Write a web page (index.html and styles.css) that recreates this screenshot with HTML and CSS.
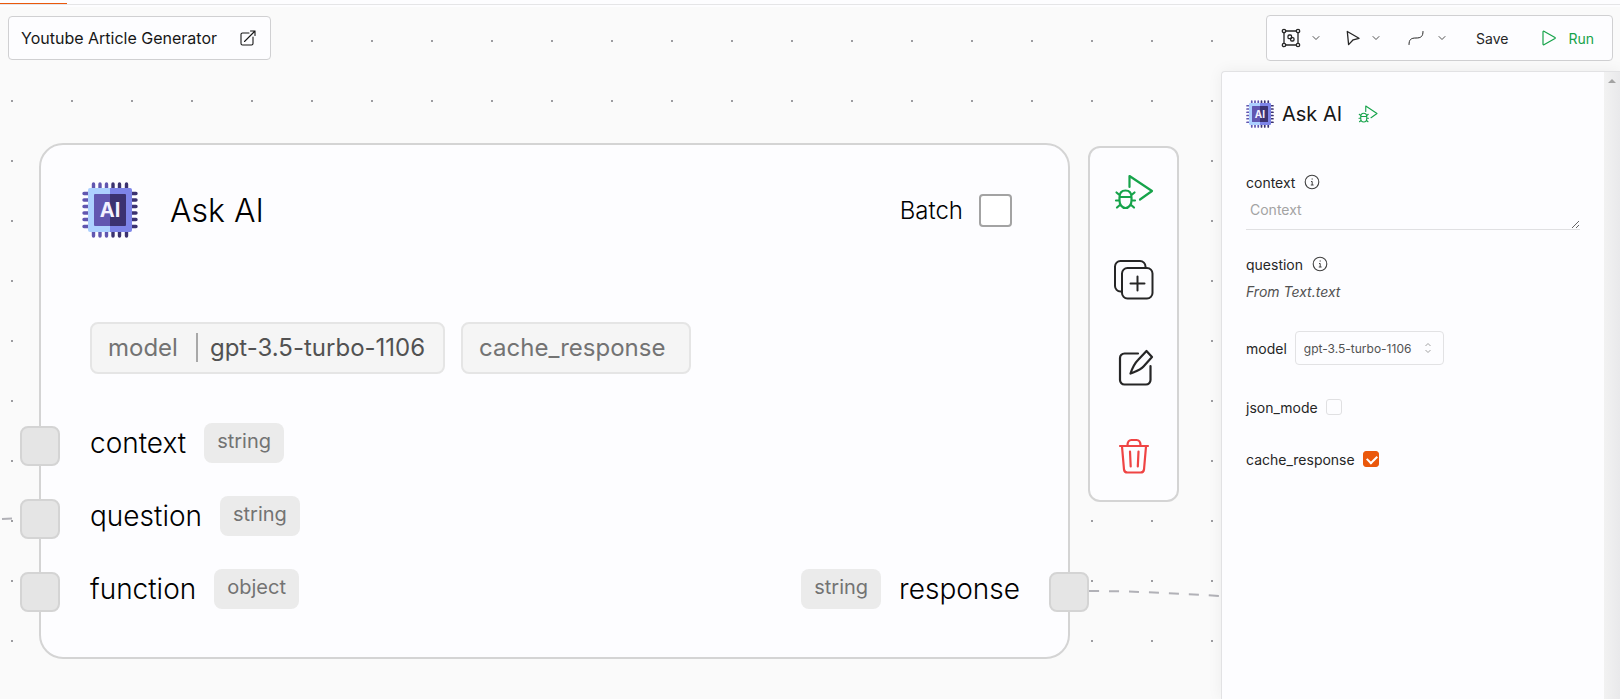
FILE: index.html
```html
<!DOCTYPE html>
<html lang="en">
<head>
  <meta charset="UTF-8">
  <title>Youtube Article Generator</title>
  <meta name="viewport" content="width=device-width, initial-scale=1.0">
  <link rel="stylesheet" href="styles.css">
</head>
<body>
  <svg class="sprite" aria-hidden="true">
    <symbol id="chip" viewBox="0 0 56 56">
      <g stroke-width="3.4" stroke-linecap="round">
        <path stroke="#6156b0" d="M11.5 2v52M18 2v52M24.5 2v52M2 11.5h26M2 18h26M2 24.5h26M2 31h26M2 37.5h26M2 44.5h26"/>
        <path stroke="#3b3270" d="M31 2v52M37.5 2v52M44.5 2v52M28 11.5h26M28 18h26M28 24.5h26M28 31h26M28 37.5h26M28 44.5h26"/>
      </g>
      <path fill="#acd0ff" d="M28 6H8a2 2 0 0 0-2 2v40a2 2 0 0 0 2 2h20z"/>
      <path fill="#7d84e8" d="M28 6h20a2 2 0 0 1 2 2v40a2 2 0 0 1-2 2H28z"/>
      <path fill="#6156b0" d="M28 12H13a1 1 0 0 0-1 1v30a1 1 0 0 0 1 1h15z"/>
      <path fill="#3b3270" d="M28 12h15a1 1 0 0 1 1 1v30a1 1 0 0 1-1 1H28z"/>
    </symbol>
    <symbol id="bug-play" viewBox="0 0 40 40">
      <g fill="none" stroke="currentColor" stroke-width="2.2" stroke-linecap="round" stroke-linejoin="round">
        <path d="M15.500 15V4L38 19 26 27.500"/>
        <path d="M5.500 25.500c0-4.500 2.500-7 6-7s6 2.500 6 7v3c0 4-2.500 7.500-6 7.500s-6-3.500-6-7.500zM5.500 25h12M5.500 23l-3-2.500M17.500 23l3-2.500M5.500 28.500H2M17.500 28.500H21M6.500 32.500l-3.500 3M16.500 32.500l3.500 3"/>
      </g>
    </symbol>
    <symbol id="chevron" viewBox="0 0 8 8">
      <path fill="none" stroke="currentColor" stroke-linecap="round" stroke-linejoin="round" d="M1 2.500l3 3 3-3"/>
    </symbol>
    <symbol id="info" viewBox="0 0 16 16">
      <circle cx="8" cy="8" r="6.800" fill="none" stroke="currentColor" stroke-width="1.100"/>
      <path fill="none" stroke="currentColor" stroke-width="1" d="M7 7.500h1.200V11M6.800 11h2.800M7.600 5h1.200"/>
    </symbol>
  </svg>

  <div class="tabs"><span class="tab-active"></span></div>

  <main class="canvas">
    <svg class="edges" aria-hidden="true">
      <path d="M2 512L40 510"/>
      <path d="M1089 584C1140 584 1180 587 1240 590"/>
    </svg>

    <header class="topbar">
      <div class="title-box">
        <span>Youtube Article Generator</span>
        <button class="icon-btn" aria-label="Open">
          <svg width="16" height="16" viewBox="0 0 16 16" fill="none" stroke="currentColor" stroke-width="1.100" stroke-linecap="round" stroke-linejoin="round"><path d="M9 3H2.500A1.500 1.500 0 0 0 1 4.500v9A1.500 1.500 0 0 0 2.500 15h9a1.500 1.500 0 0 0 1.500-1.500V7M4.500 11.500L15 1M10.500 1H15v4.500"/></svg>
        </button>
      </div>

      <div class="toolbar">
        <button class="tool" aria-label="Group">
          <svg width="20" height="20" viewBox="0 0 20 20" fill="none" stroke="currentColor" stroke-width="1.300"><path d="M5 3h10M5 17h10M3 5v10M17 5v10"/><circle cx="3" cy="3" r="1.700"/><circle cx="17" cy="3" r="1.700"/><circle cx="3" cy="17" r="1.700"/><circle cx="17" cy="17" r="1.700"/><rect x="7" y="7" width="3.600" height="3.600" rx="1.200"/><rect x="9.600" y="9.600" width="3.400" height="3.400" rx="1.200"/></svg>
          <svg class="chevron" width="8" height="8"><use href="#chevron"/></svg>
        </button>
        <button class="tool" aria-label="Pointer">
          <svg width="16" height="16" viewBox="0 0 16 16" fill="none" stroke="currentColor" stroke-width="1.300" stroke-linejoin="round"><path d="M2.300 1.500L14 8.300 8.200 9.800 3.600 14.600z"/></svg>
          <svg class="chevron" width="8" height="8"><use href="#chevron"/></svg>
        </button>
        <button class="tool curve" aria-label="Edge style">
          <svg width="16" height="16" viewBox="0 0 16 16" fill="none" stroke="currentColor" stroke-width="1" stroke-linecap="round"><path d="M1 14.500C1 9.500 3 8 8 8s7-1.500 7-6.500"/></svg>
          <svg class="chevron" width="8" height="8"><use href="#chevron"/></svg>
        </button>
        <button class="tool save">Save</button>
        <button class="tool run">
          <svg width="16" height="16" viewBox="0 0 16 16" fill="none" stroke="currentColor" stroke-width="1.200" stroke-linejoin="round"><path d="M2 1.800v12.400a.6.6 0 0 0 .9.5L14 8.500a.6.6 0 0 0 0-1L2.900 1.300a.6.6 0 0 0-.9.500z"/></svg>
          <span>Run</span>
        </button>
      </div>
    </header>

    <section class="node">
      <div class="node-head">
        <svg width="56" height="56" viewBox="0 0 56 56"><use href="#chip"/><text class="chip-text" x="28" y="35" text-anchor="middle">AI</text></svg>
        <h2>Ask AI</h2>
        <label class="batch">Batch <input type="checkbox"></label>
      </div>

      <div class="chips">
        <div class="chip"><span>model</span><span class="chip-value">gpt-3.5-turbo-1106</span></div>
        <div class="chip flag"><span>cache_response</span></div>
      </div>

      <div class="ports">
        <div class="port">
          <i class="handle in"></i>
          <span>context</span><span class="type">string</span>
        </div>
        <div class="port">
          <i class="handle in"></i>
          <span>question</span><span class="type">string</span>
        </div>
        <div class="port">
          <i class="handle in"></i>
          <span>function</span><span class="type">object</span>
          <span class="type output">string</span><span>response</span>
          <i class="handle out"></i>
        </div>
      </div>
    </section>

    <div class="node-menu">
      <button class="green" aria-label="Run node"><svg width="40" height="40"><use href="#bug-play"/></svg></button>
      <button aria-label="Duplicate">
        <svg width="40" height="40" viewBox="0 0 40 40" fill="none" stroke="currentColor" stroke-width="2" stroke-linecap="round" stroke-linejoin="round"><rect x="8" y="8" width="30.500" height="30.500" rx="5.500"/><path d="M8 31.500H6.500A5.500 5.500 0 0 1 1 26V6.500A5.500 5.500 0 0 1 6.500 1H26a5.500 5.500 0 0 1 5.500 5.500V8M23.500 16.500v14M16.500 23.500h14"/></svg>
      </button>
      <button aria-label="Edit">
        <svg width="40" height="40" viewBox="0 0 40 40" fill="none" stroke="currentColor" stroke-width="2.200" stroke-linecap="round" stroke-linejoin="round"><path d="M24 5.500H10.500A4.500 4.500 0 0 0 6 10v22a4.500 4.500 0 0 0 4.500 4.500h21.500a4.500 4.500 0 0 0 4.500-4.500V18"/><path d="M32.500 3l5.500 6-8.500 9.500c-3 3.500-7 4.500-13 7 2-6 4.500-10.500 7.500-13.500z"/></svg>
      </button>
      <button class="red" aria-label="Delete">
        <svg width="40" height="40" viewBox="0 0 40 40" fill="none" stroke="currentColor" stroke-width="2.200" stroke-linecap="round" stroke-linejoin="round"><path d="M6 10h28M13.500 9.500C13.500 6 15 4 17.500 4h5c2.500 0 4 2 4 5.500M8 10.500l2 23a3.500 3.500 0 0 0 3.500 3h13a3.500 3.500 0 0 0 3.500-3l2-23M16 15.500l.7 15M24.500 15.500l-.7 15"/></svg>
      </button>
    </div>

    <aside class="panel">
      <form class="panel-body">
        <div class="panel-head">
          <svg width="28" height="28" viewBox="0 0 56 56"><use href="#chip"/><text class="chip-text" x="28" y="35" text-anchor="middle">AI</text></svg>
          <h3>Ask AI</h3>
          <button type="button" class="icon-btn green" aria-label="Run node"><svg width="20" height="20"><use href="#bug-play"/></svg></button>
        </div>

        <div class="field">
          <div class="field-label"><label for="context">context</label><svg width="16" height="16"><use href="#info"/></svg></div>
          <textarea id="context" placeholder="Context"></textarea>
        </div>
        <div class="field">
          <div class="field-label"><span>question</span><svg width="16" height="16"><use href="#info"/></svg></div>
          <em>From Text.text</em>
        </div>
        <div class="field row model-row">
          <label for="model">model</label>
          <div class="select">
            <select id="model"><option>gpt-3.5-turbo-1106</option></select>
            <svg width="8" height="12" viewBox="0 0 8 12" fill="none" stroke="currentColor"><path d="M1.500 4L4 1.500 6.500 4M1.500 8L4 10.500 6.500 8"/></svg>
          </div>
        </div>
        <div class="field row">
          <label for="json">json_mode</label>
          <input type="checkbox" id="json">
        </div>
        <div class="field row">
          <label for="cache">cache_response</label>
          <input type="checkbox" id="cache" checked>
        </div>
      </form>
      <div class="scrollbar"></div>
    </aside>
  </main>
</body>
</html>
```
FILE: styles.css
```css
* {
  box-sizing: border-box;
}
body {
  margin: 0;
  height: 100vh;
  display: flex;
  flex-direction: column;
  overflow: hidden;
  background-color: #fdfdff;
  color: #262626;
  font-family: Inter, "Liberation Sans", sans-serif;
  font-size: 14px;
}
h2, h3 {
  margin: 0;
  font-weight: inherit;
}
button, select, textarea {
  font: inherit;
  color: inherit;
}
button {
  display: flex;
  align-items: center;
  padding: 0;
  border: none;
  background: none;
  cursor: pointer;
}
.sprite {
  position: absolute;
  width: 0;
  height: 0;
}
.chip-text {
  fill: #f3f0ff;
  font-size: 20px;
  font-weight: 700;
}
.green {
  color: #16a34a;
}
.red {
  color: #ef4444;
}

/* Tabs */
.tabs {
  flex: none;
  height: 5px;
  margin-bottom: 2px;
  border-bottom: 1px solid #e5e5e7;
}
.tab-active {
  display: block;
  width: 67px;
  height: 4px;
  border-bottom: 1px solid #ea580c;
}

/* Canvas */
.canvas {
  position: relative;
  flex: 1;
  background-color: #fafafa;
  background-image: radial-gradient(circle at 12px 34px, #9c9ca0 1px, transparent 1px);
  background-size: 60px 60px;
}
.edges {
  position: absolute;
  width: 100%;
  height: 100%;
  fill: none;
  stroke: #b1b1b7;
  stroke-width: 2;
  stroke-dasharray: 10;
}

/* Top bar */
.topbar {
  position: relative;
  display: flex;
  justify-content: space-between;
  align-items: flex-start;
  padding: 8px 7px 0 8px;
}
.title-box,
.toolbar {
  display: flex;
  align-items: center;
  border: 1px solid #d0d0d2;
  border-radius: 4px;
  background-color: #fdfdff;
}
.title-box {
  gap: 23px;
  height: 44px;
  margin-top: 1px;
  padding: 0 14px 0 12px;
  color: #171717;
  font-size: 16px;
}
.toolbar {
  gap: 25px;
  height: 46px;
  padding: 0 18px 0 14px;
}
.tool {
  gap: 11px;
}
.curve {
  gap: 14px;
  margin-left: 3px;
}
.save {
  padding: 0 8px 0 5px;
}
.run {
  color: #16a34a;
}
.chevron {
  color: #525252;
}

/* Node */
.node {
  position: absolute;
  top: 136px;
  left: 39px;
  width: 1031px;
  padding: 34px 48px 32px 49px;
  border: 2px solid #d4d4d4;
  border-radius: 24px;
  background-color: #fdfdff;
  color: #000;
  font-weight: 300;
}
.node-head {
  display: flex;
  align-items: center;
  height: 62px;
  padding-right: 8px;
  margin-left: -8px;
}
.node-head h2 {
  margin-left: 32px;
  font-size: 32px;
}
.batch {
  display: flex;
  align-items: center;
  gap: 16px;
  margin-left: auto;
  font-size: 24px;
}
.batch input {
  appearance: none;
  width: 33px;
  height: 33px;
  margin: 0;
  border: 2px solid #a3a3a3;
  border-radius: 4px;
  background-color: #fff;
}
.chips {
  display: flex;
  gap: 16px;
  margin-top: 81px;
}
.chip {
  display: flex;
  align-items: center;
  height: 52px;
  padding: 0 18px 2px 16px;
  border: 2px solid #e5e5e5;
  border-radius: 8px;
  background-color: #f5f5f5;
  color: #737373;
  font-size: 24px;
  font-weight: 400;
}
.flag {
  padding-right: 24px;
}
.chip-value {
  display: flex;
  align-items: center;
  margin-left: 18px;
  color: #525252;
}
.chip-value::before {
  content: "";
  width: 2px;
  height: 29px;
  margin-right: 12px;
  background-color: #a8a8a8;
}
.ports {
  margin-top: 32px;
}
.port {
  position: relative;
  display: flex;
  align-items: center;
  gap: 18px;
  height: 73px;
  font-size: 28px;
}
.type {
  height: 40px;
  padding: 0 13px;
  border-radius: 8px;
  background-color: #ebebeb;
  color: #737373;
  font-size: 20px;
  font-weight: 400;
  line-height: 36px;
}
.output {
  margin-left: auto;
}
.handle {
  position: absolute;
  top: 20px;
  width: 40px;
  height: 40px;
  border: 2px solid #d4d4d4;
  border-radius: 8px;
  background-color: #e5e5e5;
}
.in {
  left: -70px;
}
.out {
  right: -69px;
}

/* Node actions */
.node-menu {
  position: absolute;
  top: 139px;
  left: 1088px;
  display: flex;
  flex-direction: column;
  align-items: center;
  gap: 48px;
  width: 91px;
  padding: 24px 0;
  border: 2px solid #d4d4d4;
  border-radius: 12px;
  background-color: #fdfdff;
}

/* Side panel */
.panel {
  position: absolute;
  top: 64px;
  right: 0;
  bottom: 0;
  display: flex;
  width: 399px;
  border: 1px solid #e2e2e4;
  border-width: 1px 0 0 1px;
  border-radius: 4px 0 0 0;
  background-color: #fdfdff;
  box-shadow: 0 0 15px rgba(0,0,0,0.06);
}
.panel-body {
  flex: 1;
  padding: 28px 24px;
}
.panel-head {
  display: flex;
  align-items: center;
  gap: 8px;
  margin-bottom: 44px;
}
.panel-head h3 {
  color: #171717;
  font-size: 20px;
  line-height: 28px;
}
.panel-head .icon-btn {
  margin-left: 8px;
}
.field {
  margin-bottom: 24px;
}
.field-label {
  display: flex;
  align-items: center;
  gap: 9px;
  height: 20px;
}
.field-label svg {
  color: #404040;
}
.field em {
  display: block;
  height: 20px;
  margin-top: 8px;
  color: #525252;
  line-height: 20px;
}
.field textarea {
  display: block;
  width: 100%;
  height: 38px;
  padding: 8px 4px;
  border: none;
  border-bottom: 1px solid #e0e0e2;
  background: none;
  line-height: 20px;
  resize: vertical;
}
.field textarea::placeholder {
  color: #a3a3a3;
}
.row {
  display: flex;
  align-items: center;
  gap: 8px;
  height: 28px;
}
.row input {
  appearance: none;
  width: 16px;
  height: 16px;
  margin: 0;
  border: 1px solid #e0e0e2;
  border-radius: 3px;
}
.row input:checked {
  border-color: #ea580c;
  background-color: #ea580c;
}
.row input:checked::after {
  content: "";
  display: block;
  width: 8px;
  height: 5px;
  margin: 3px;
  border: solid #fff;
  border-width: 0 0 2px 2px;
  transform: rotate(-45deg);
}
.model-row {
  height: 34px;
  margin: 29px 0 28px;
}
.select {
  position: relative;
}
.select select {
  appearance: none;
  width: 149px;
  height: 34px;
  padding: 0 8px;
  border: 1px solid #e2e2e4;
  border-radius: 4px;
  background: none;
  color: #525252;
  font-size: 12px;
}
.select svg {
  position: absolute;
  top: 11px;
  right: 12px;
  color: #a3a3a3;
}
.scrollbar {
  width: 16px;
  padding: 7px 4px;
  background: linear-gradient(to right, #f2f2f2, #e9e9eb);
}
.scrollbar::before {
  content: "";
  display: block;
  border: 4px solid transparent;
  border-top: none;
  border-bottom-color: #a3a3a3;
}
```
